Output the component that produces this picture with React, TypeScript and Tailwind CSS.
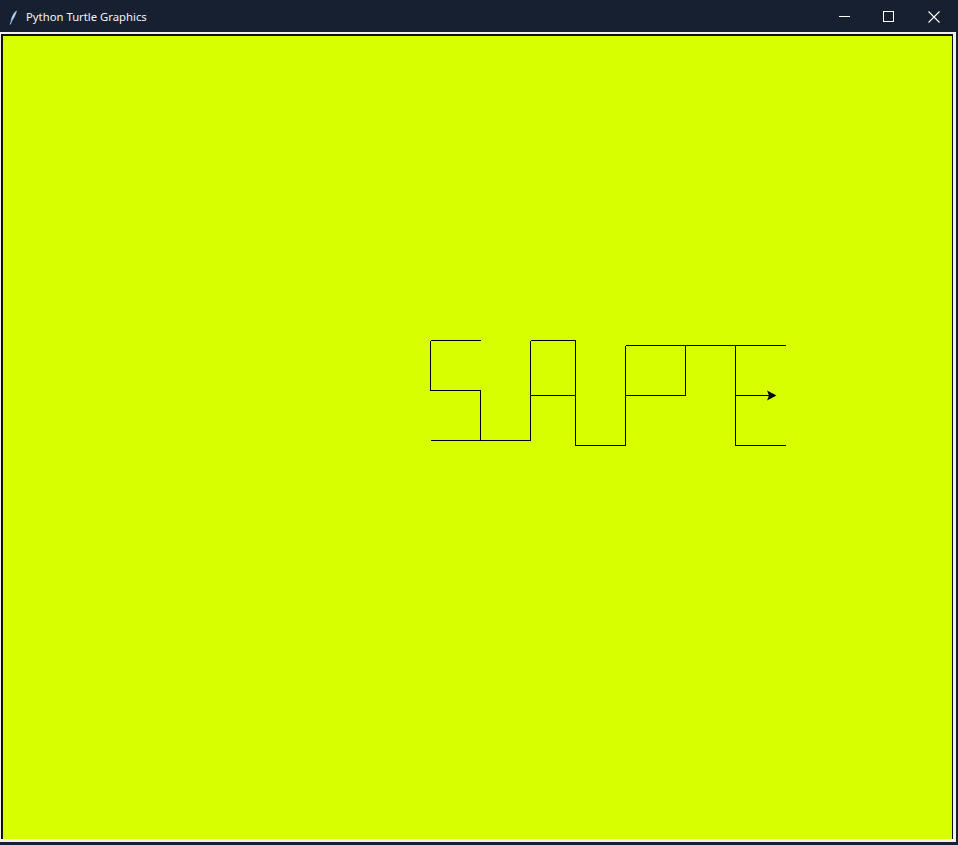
import React from 'react';

// turtle path segments, in page pixel coordinates
const SEGMENTS: [number, number, number, number][] = [
  // S
  [480, 340, 430, 340],
  [430, 340, 430, 390],
  [430, 390, 480, 390],
  [480, 390, 480, 440],
  [430, 440, 530, 440],
  // A
  [530, 440, 530, 340],
  [530, 340, 575, 340],
  [530, 395, 575, 395],
  [575, 340, 575, 445],
  [575, 445, 625, 445],
  // P
  [625, 445, 625, 345],
  [625, 345, 785, 345],
  [685, 345, 685, 395],
  [625, 395, 685, 395],
  // E
  [735, 345, 735, 445],
  [735, 445, 785, 445],
  [735, 395, 770, 395],
];

const TitleBar: React.FC = () => (
  <div className="h-[32px] flex items-center bg-[#172030] text-white">
    <div className="w-[26px] h-full flex items-center justify-center pl-[1px] pt-[2px]">
      <svg width="9" height="15" viewBox="0 0 9 15">
        <path d="M7.5 1 C4.5 3 2.5 7.5 1.8 13 C3.5 9.5 6.5 5.5 7.5 1 Z" fill="#d6e6ff" stroke="#8fb6ea" strokeWidth="0.7" />
        <path d="M1.8 13 L1.2 14.5" stroke="#d6e6ff" strokeWidth="0.9" />
      </svg>
    </div>
    <span className="pt-[2px] text-[11.3px] leading-none font-['Noto_Sans','Open_Sans',sans-serif] text-[#f2f4f7]">
      Python Turtle Graphics
    </span>
    <div className="ml-auto flex h-full pt-[1px]">
      <div className="w-[44px] h-full flex items-center justify-center">
        <div className="w-[11px] h-px bg-white" />
      </div>
      <div className="w-[44px] h-full flex items-center justify-center">
        <div className="w-[11px] h-[11px] border border-white" />
      </div>
      <div className="w-[48px] h-full flex items-center justify-center">
        <svg width="12" height="12" viewBox="0 0 12 12">
          <path d="M0.5 0.5 L11.5 11.5 M11.5 0.5 L0.5 11.5" stroke="white" strokeWidth="1.1" />
        </svg>
      </div>
    </div>
  </div>
);

const TurtleCanvas: React.FC = () => (
  <div className="w-[952px] h-[805px] bg-[#d8ff00] border-t-2 border-l-2 border-r border-t-[#101010] border-l-[#101010] border-r-[#101010]">
    <svg width="949" height="803" className="block" viewBox="3 36 949 803">
      {SEGMENTS.map(([x1, y1, x2, y2], i) => (
        <line
          key={i}
          x1={x1 + 0.5}
          y1={y1 + 0.5}
          x2={x2 + 0.5}
          y2={y2 + 0.5}
          stroke="#000"
          strokeWidth="1"
          shapeRendering="crispEdges"
        />
      ))}
      {/* classic turtle arrow head */}
      <polygon points="776.5,395.5 767,390.5 769,395.5 767,400.5" fill="#000" />
    </svg>
  </div>
);

const App: React.FC = () => {
  return (
    <div className="w-[958px] h-[845px] bg-[#172030] flex flex-col overflow-hidden">
      <TitleBar />
      <div className="w-[956px] h-[810px] bg-[#f0f0f0] pt-[2px] pl-px">
        <TurtleCanvas />
      </div>
    </div>
  );
};

export default App;
